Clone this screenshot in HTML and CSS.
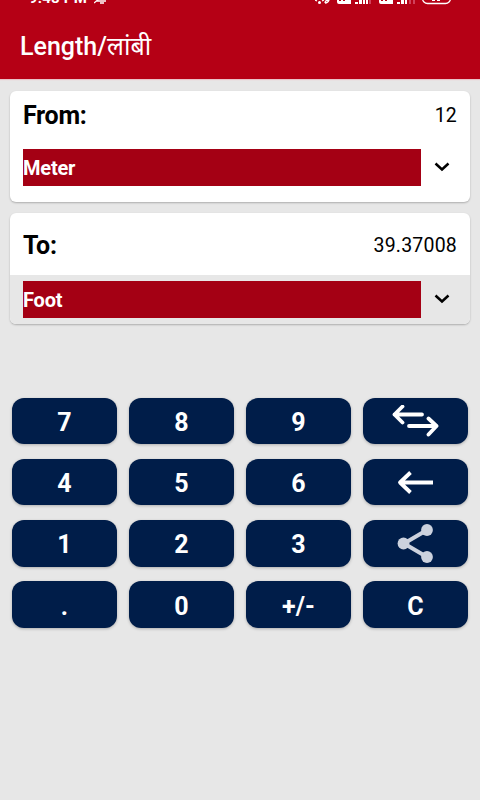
FILE: index.html
```html
<!DOCTYPE html>
<html lang="en">

<head>
  <meta charset="UTF-8">
  <meta name="viewport" content="width=device-width, initial-scale=1.0">
  <title>Length/लांबी</title>
  <link rel="stylesheet" href="styles.css">
</head>

<body>
  <header class="header">
    <div class="status">
      <div class="status-left">
        <span class="time">9:48 PM</span>
        <svg width="14" height="14" viewBox="0 0 14 14" fill="none" stroke="#fff" stroke-width="1.3">
          <path d="M3 10h9M4 9V5a3 3 0 0 1 7 0v4M0 12L12 2M6 12h4" />
        </svg>
      </div>
      <svg width="140" height="14" viewBox="0 0 140 14">
        <g fill="none" stroke="#fff" stroke-width="1.3">
          <path d="M0 9l2 1M7 10l2-1M10 12q0-3 4-3q-1 3-4 3" />
          <rect x="107.5" y="0" width="28" height="12.5" rx="5" />
        </g>
        <g fill="#fff">
          <circle cx="4.5" cy="11.5" r="1.5" />
          <path d="M22 7h2v3h2v-2h2v2h2v-2h6v5H24q-2 0-2-2zM40 11h3v2h-3zM44 9h3v4h-3zM48 7h2v6h-2zM51 5h2v8h-2z" />
          <path d="M64 7h2v3h2v-2h2v2h2v-2h6v5H66q-2 0-2-2zM82 11h3v2h-3zM86 9h3v4h-3zM90 7h2v6h-2z" />
          <path d="M117 5h3v5h-3zM122 5h3v5h-3z" />
        </g>
        <path d="M54 5h2v8h-2zM94 5h2v8h-2zM98 5h2v8h-2z" fill="#d0405a" />
      </svg>
    </div>
    <h1 class="title">Length/<span class="hindi">लांबी</span></h1>
  </header>

  <main>
    <section class="card card-from">
      <div class="row">
        <h2 class="label">From:</h2>
        <span class="value">12</span>
      </div>
      <div class="select">
        <span class="unit">Meter</span>
        <svg class="arrow" width="16" height="10" viewBox="0 0 16 10">
          <path d="M1.5 1.5L8 7.5l6.5-6" />
        </svg>
      </div>
    </section>

    <section class="card card-to">
      <div class="row">
        <h2 class="label">To:</h2>
        <span class="value">39.37008</span>
      </div>
      <div class="select">
        <span class="unit">Foot</span>
        <svg class="arrow" width="16" height="10" viewBox="0 0 16 10">
          <path d="M1.5 1.5L8 7.5l6.5-6" />
        </svg>
      </div>
    </section>

    <div class="keypad">
      <button type="button">7</button>
      <button type="button">8</button>
      <button type="button">9</button>
      <button type="button" aria-label="Swap">
        <svg class="icon" width="48" height="34" viewBox="0 0 48 34">
          <path d="M30 9.5H2.5M10.500 1.500l-8 8 8 8M17 21H44.500M36.500 13.500l8 7.500-8 8.500" />
        </svg>
      </button>
      <button type="button">4</button>
      <button type="button">5</button>
      <button type="button">6</button>
      <button type="button" aria-label="Back">
        <svg class="icon back" width="48" height="34" viewBox="0 0 48 34">
          <path d="M41 15.5H8.5M18.500 5.500L8 15.500 18.500 25.500" />
        </svg>
      </button>
      <button type="button">1</button>
      <button type="button">2</button>
      <button type="button">3</button>
      <button type="button" aria-label="Share">
        <svg class="share" width="36" height="40" viewBox="0 0 36 40">
          <path d="M29 5L6 18.500 29 32" />
          <circle cx="29" cy="5" r="5.900" />
          <circle cx="5.500" cy="18.500" r="5.900" />
          <circle cx="29" cy="32" r="5.900" />
        </svg>
      </button>
      <button type="button">.</button>
      <button type="button">0</button>
      <button type="button">+/-</button>
      <button type="button">C</button>
    </div>
  </main>
</body>

</html>
```
FILE: styles.css
```css
* {
  box-sizing: border-box;
}

body {
  margin: 0;
  height: 800px;
  overflow: hidden;
  background-color: #e7e7e7;
  color: #000;
  font-family: Roboto, "Noto Sans", sans-serif;
}

.header,
.card {
  overflow: hidden;
}

.header {
  height: 79px;
  background-color: #b50015;
  color: #fff;
  box-shadow: 0 1px 1px #e9c3c8;
}

/* status bar, scrolled partly off the top */
.status {
  display: flex;
  justify-content: space-between;
  height: 14px;
  margin-top: -9px;
  padding: 0 25px 0 29px;
}

.status-left {
  display: flex;
  gap: 7px;
}

.time {
  font-size: 15px;
  font-weight: 700;
  line-height: 14px;
  letter-spacing: 0.2px;
}

.title {
  margin: 24px 0 0 20px;
  font-size: 25px;
  font-weight: 500;
  line-height: 36px;
}

.hindi {
  font-weight: 400;
}

.card {
  height: 111px;
  margin: 12px 10px 0;
  border-radius: 6px;
  background-color: #fff;
  box-shadow: 0 1px 2px rgba(0, 0, 0, 0.25);
}

.card-to {
  margin-top: 11px;
}

.row {
  display: flex;
  align-items: center;
  justify-content: space-between;
  height: 48px;
  padding: 0 13px;
}

.card-to .row {
  height: 62px;
}

.label {
  margin: 0;
  font-size: 25px;
  font-weight: 700;
  letter-spacing: -0.3px;
}

.card-to .label,
.card-to .value {
  margin-top: 2px;
}

.value {
  font-size: 19.5px;
  letter-spacing: 0.2px;
}

.select {
  display: flex;
  align-items: center;
  padding: 10px 20px 0 13px;
}

.card-to .select {
  height: 49px;
  padding: 0 20px 1px 13px;
  background-color: #e7e7e7;
}

.unit {
  flex: 1;
  height: 37px;
  margin-right: 13px;
  background-color: #a40014;
  color: #fff;
  font-size: 20px;
  font-weight: 700;
  line-height: 38px;
  letter-spacing: -0.2px;
}

.arrow {
  margin-top: -1px;
  fill: none;
  stroke: #000;
  stroke-width: 2.5;
}

.keypad {
  display: grid;
  grid-template-columns: repeat(4, 105px);
  grid-auto-rows: 46.5px;
  gap: 14.8px 12px;
  margin: 73.5px 12px 0;
}

.keypad button {
  display: flex;
  align-items: center;
  justify-content: center;
  padding: 3px 0 0;
  border: 0;
  border-radius: 12px;
  background-color: #001d49;
  color: #fff;
  font: 700 25px Roboto, sans-serif;
  box-shadow: 0 1px 3px rgba(0, 0, 0, 0.25);
}

.icon {
  fill: none;
  stroke: #fff;
  stroke-width: 3.8;
  stroke-linecap: round;
  stroke-linejoin: round;
}

.back {
  stroke-linecap: butt;
}

.share {
  overflow: visible;
  fill: #ccd2de;
}

.share path {
  fill: none;
  stroke: #ccd2de;
  stroke-width: 4;
}
```
